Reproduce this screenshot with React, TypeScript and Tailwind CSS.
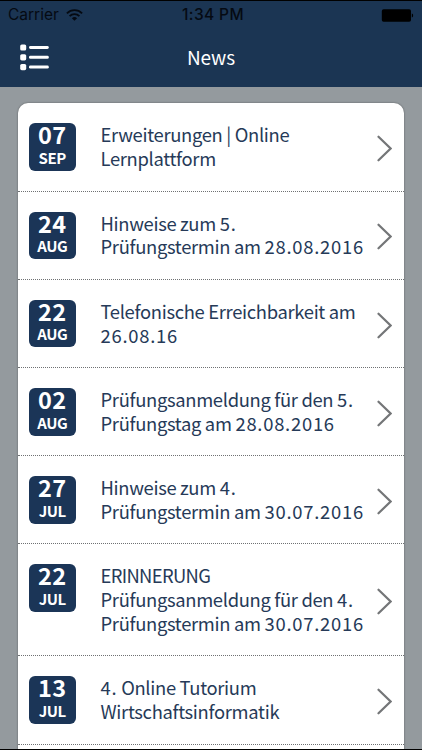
import React from 'react';

type NewsItem = {
  day: string;
  month: string;
  lines: string[];
};

const NEWS: NewsItem[] = [
  { day: '07', month: 'SEP', lines: ['Erweiterungen | Online', 'Lernplattform'] },
  { day: '24', month: 'AUG', lines: ['Hinweise zum 5.', 'Prüfungstermin am 28.08.2016'] },
  { day: '22', month: 'AUG', lines: ['Telefonische Erreichbarkeit am', '26.08.16'] },
  { day: '02', month: 'AUG', lines: ['Prüfungsanmeldung für den 5.', 'Prüfungstag am 28.08.2016'] },
  { day: '27', month: 'JUL', lines: ['Hinweise zum 4.', 'Prüfungstermin am 30.07.2016'] },
  {
    day: '22',
    month: 'JUL',
    lines: ['ERINNERUNG', 'Prüfungsanmeldung für den 4.', 'Prüfungstermin am 30.07.2016'],
  },
  { day: '13', month: 'JUL', lines: ['4. Online Tutorium', 'Wirtschaftsinformatik'] },
];

function WifiIcon() {
  return (
    <svg width="17" height="12" viewBox="0 0 17 12" fill="none" stroke="#050a12" strokeWidth="1.9" aria-hidden="true">
      <path d="M0.9 4.3a10.8 10.8 0 0 1 15.2 0" />
      <path d="M3.6 7.1a7 7 0 0 1 9.8 0" />
      <path d="M8.5 11.8 5.9 9.2a3.7 3.7 0 0 1 5.2 0z" fill="#050a12" stroke="none" />
    </svg>
  );
}

function BatteryIcon() {
  return (
    <svg width="33" height="13" viewBox="0 0 33 13" fill="#000" aria-hidden="true">
      <rect x="0.8" y="0.3" width="29.2" height="12.4" rx="1.8" />
      <path d="M30.8 4.5c1.8.4 1.8 3.6 0 4z" />
    </svg>
  );
}

function MenuIcon() {
  return (
    <svg width="29" height="27" viewBox="0 0 29 27" fill="#fff" aria-hidden="true">
      {[0.4, 10.2, 20].map((y) => (
        <g key={y}>
          <rect x="0.2" y={y} width="6" height="6.2" rx="1.6" />
          <rect x="9" y={y + 1.6} width="19.8" height="3" rx="1.4" />
        </g>
      ))}
    </svg>
  );
}

function Chevron() {
  return (
    <svg
      className="mt-[3px] mr-3 shrink-0"
      width="15"
      height="27"
      viewBox="0 0 15 27"
      fill="none"
      stroke="#747678"
      strokeWidth="2.2"
      strokeLinecap="round"
      aria-hidden="true"
    >
      <path d="M1.5 1.7 13.6 13.5 1.5 25.3" />
    </svg>
  );
}

// Numbers are set wider than the surrounding words, all-caps lines tighter.
function Line({ text }: { text: string }) {
  return (
    <div className={text === text.toUpperCase() ? 'tracking-[-0.65px]' : undefined}>
      {text.split(/(\d[\d.]*)/).map((part, i) =>
        i % 2 === 1 ? (
          <span key={i} className="tracking-[0.75px]">
            {part}
          </span>
        ) : (
          part
        ),
      )}
    </div>
  );
}

function DateBadge({ day, month }: { day: string; month: string }) {
  return (
    <div className="flex h-[47.5px] w-[47.5px] shrink-0 flex-col items-center self-start rounded-md bg-[#1b3557] font-bold text-white">
      <span className="h-[24.5px] text-[23.5px] leading-[22px] tracking-[0.4px]">{day}</span>
      <span className="text-[15px] leading-[20px] tracking-[-0.4px]">{month}</span>
    </div>
  );
}

function NewsRow({ item }: { item: NewsItem }) {
  return (
    <li className="flex items-center border-b border-dotted border-[#6f7173] pt-[20px] pb-[19.6px] pl-[10.5px]">
      <DateBadge day={item.day} month={item.month} />
      <div className="ml-[24.5px] flex-1 text-[18.4px] leading-[23.8px] tracking-[-0.32px] whitespace-nowrap text-[#263a58]">
        {item.lines.map((line) => (
          <Line key={line} text={line} />
        ))}
      </div>
      <Chevron />
    </li>
  );
}

export default function App(): React.ReactElement {
  return (
    <div className="flex h-[750px] w-[422px] flex-col overflow-hidden border-y border-black bg-[#949a9e] font-['Noto_Sans_CJK_SC',sans-serif]">
      <header className="flex h-[85.7px] shrink-0 flex-col bg-[#1b3553]">
        <div className="grid h-[28px] grid-cols-3 items-center pr-2 pl-2 font-['Inter',sans-serif] text-[15.5px] text-[#050a12]">
          <div className="flex items-center gap-[7px]">
            <span>Carrier</span>
            <WifiIcon />
          </div>
          <span className="pl-1 text-center font-medium tracking-[0.4px] whitespace-nowrap">1:34 PM</span>
          <div className="flex justify-end">
            <BatteryIcon />
          </div>
        </div>
        <div className="grid flex-1 grid-cols-3 items-center">
          <button className="ml-5 w-[29px]" aria-label="Menu">
            <MenuIcon />
          </button>
          <h1 className="pb-[2px] text-center text-[19px] tracking-[-0.1px] text-white">News</h1>
        </div>
      </header>

      <main className="min-h-0 flex-1 px-[18px] pt-[16.8px]">
        <ul className="h-[700px] rounded-t-[10px] bg-white shadow-[0_0_2px_rgba(0,0,0,0.45)]">
          {NEWS.map((item) => (
            <NewsRow key={`${item.day}-${item.month}`} item={item} />
          ))}
        </ul>
      </main>
    </div>
  );
}
